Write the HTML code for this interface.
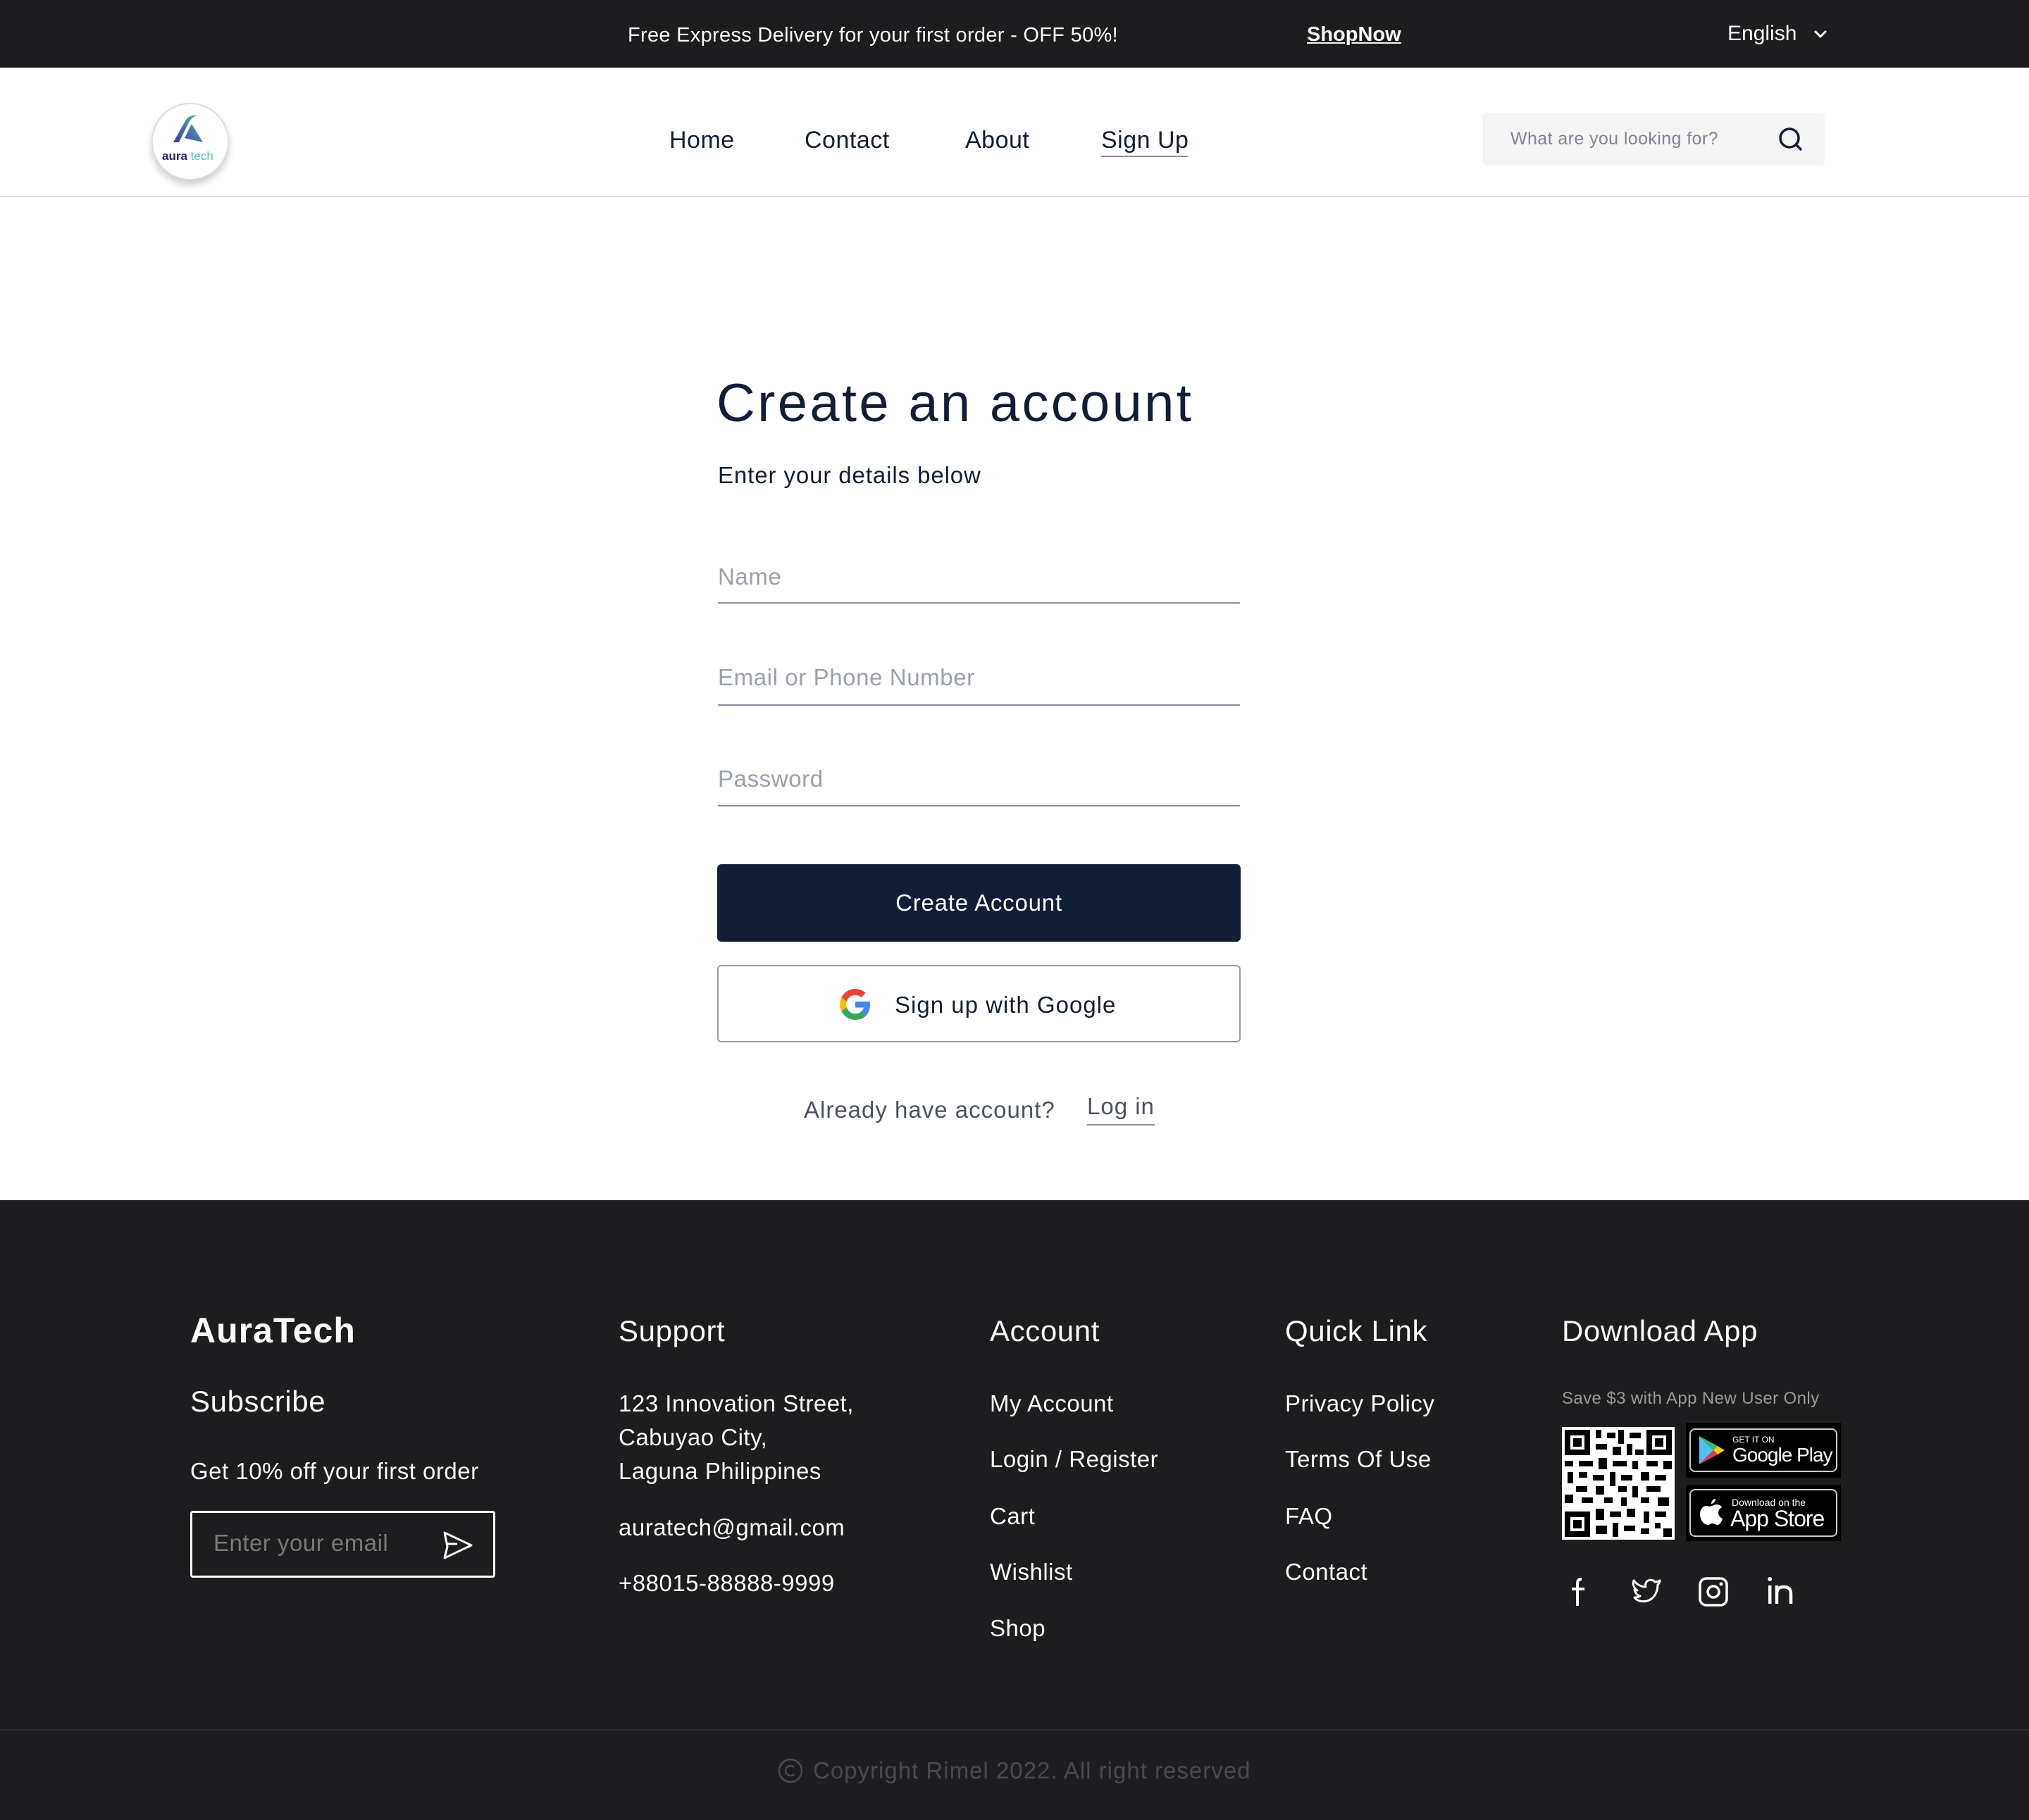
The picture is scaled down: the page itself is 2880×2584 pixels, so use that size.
<!DOCTYPE html>
<html><head><meta charset="utf-8"><style>
*{margin:0;padding:0;box-sizing:border-box}
body{width:2880px;height:2584px;position:relative;background:#fff;font-family:"Liberation Sans",Arial,sans-serif;overflow:hidden}
.a{position:absolute;white-space:nowrap}
.top{position:absolute;left:0;top:0;width:2880px;height:96px;background:#1d1d1f;color:#fafafa}
.hdr{position:absolute;left:0;top:96px;width:2880px;height:184px;border-bottom:2px solid #e2e2e2}
.nav{font-size:34px;color:#121d36;letter-spacing:0.5px}
.ph{font-size:33px;color:#9aa0ab;left:1019px;letter-spacing:0.6px}
.ul{position:absolute;left:1019px;width:741px;height:2px;background:#8a909c}
.foot{position:absolute;left:0;top:1704px;width:2880px;height:880px;background:#1d1d1f}
.fh{font-size:42px;color:#fafafa;letter-spacing:0.6px}
.fi{font-size:33px;color:#fafafa;letter-spacing:0.5px}
</style></head><body>
<div class="top">
<div class="a" style="left:891px;top:34px;font-size:29px;letter-spacing:0.3px">Free Express Delivery for your first order - OFF 50%!</div>
<div class="a" style="left:1855px;top:33px;font-size:29px;font-weight:bold;text-decoration:underline">ShopNow</div>
<div class="a" style="left:2452px;top:31px;font-size:30px">English</div>
<svg class="a" style="left:2572px;top:36px" width="24" height="24" viewBox="0 0 24 24"><path d="M4 8l8 8 8-8" fill="none" stroke="#fff" stroke-width="3"/></svg>
</div>
<div class="hdr">
<div class="a" style="left:215px;top:50px;width:110px;height:110px;border-radius:50%;background:#fff;border:2px solid #ddd;box-shadow:0 6px 10px rgba(0,0,0,.2)"></div>
<svg class="a" style="left:240px;top:66px" width="60" height="44" viewBox="0 0 60 44"><defs><linearGradient id="g" x1="0" y1="1" x2="1" y2="0"><stop offset="0" stop-color="#4b2fa6"/><stop offset="1" stop-color="#3cc9a0"/></linearGradient></defs><path d="M6 40 L24 8 Q30 0 40 2 Q32 4 28 12 L14 40Z M22 34 L32 14 L48 40Z" fill="url(#g)"/></svg>
<div class="a" style="left:230px;top:116px;font-size:17px;font-weight:bold;color:#2b2266">aura <span style="color:#4cc2b0;font-weight:normal">tech</span></div>
<div class="a nav" style="left:950px;top:84px">Home</div>
<div class="a nav" style="left:1142px;top:84px">Contact</div>
<div class="a nav" style="left:1370px;top:84px">About</div>
<div class="a nav" style="left:1563px;top:84px;border-bottom:2px solid #8a909c;padding-bottom:2px">Sign Up</div>
<div class="a" style="left:2105px;top:64px;width:485px;height:75px;background:#f4f4f4;border-radius:6px"></div>
<div class="a" style="left:2144px;top:87px;font-size:25px;color:#7d8594;letter-spacing:0.4px">What are you looking for?</div>
<svg class="a" style="left:2522px;top:82px" width="40" height="40" viewBox="0 0 40 40"><circle cx="18" cy="18" r="13" fill="none" stroke="#121d36" stroke-width="3.5"/><path d="M27 27l8 8" stroke="#121d36" stroke-width="3.5"/></svg>
</div>

<div class="a" style="left:1017px;top:529px;font-size:76px;color:#121d36;letter-spacing:3.3px">Create an account</div>
<div class="a" style="left:1019px;top:656px;font-size:33px;color:#121d36;letter-spacing:0.9px">Enter your details below</div>
<div class="a ph" style="top:800px">Name</div><div class="ul" style="top:855px"></div>
<div class="a ph" style="top:943px">Email or Phone Number</div><div class="ul" style="top:1000px"></div>
<div class="a ph" style="top:1087px">Password</div><div class="ul" style="top:1143px"></div>
<div class="a" style="left:1018px;top:1227px;width:743px;height:110px;background:#121d36;border-radius:6px;color:#fff;font-size:33px;text-align:center;line-height:110px;letter-spacing:0.8px">Create Account</div>
<div class="a" style="left:1018px;top:1370px;width:743px;height:110px;border:2px solid #9a9ea6;border-radius:6px"></div>
<svg class="a" style="left:1190px;top:1402px" width="48" height="48" viewBox="0 0 48 48"><path fill="#4285F4" d="M45 24.5c0-1.6-.1-3-.4-4.5H24v8.5h11.8c-.5 2.7-2 5-4.4 6.6v5.5h7.1C42.6 36.8 45 31.2 45 24.5z"/><path fill="#34A853" d="M24 46c5.9 0 10.9-2 14.5-5.4l-7.1-5.5c-2 1.3-4.5 2.1-7.4 2.1-5.7 0-10.5-3.8-12.2-9H4.5v5.7C8.1 41.1 15.5 46 24 46z"/><path fill="#FBBC05" d="M11.8 28.2c-.4-1.3-.7-2.7-.7-4.2s.3-2.9.7-4.2v-5.7H4.5C3 17.1 2 20.4 2 24s1 6.9 2.5 9.9z"/><path fill="#EA4335" d="M24 10.8c3.2 0 6.1 1.1 8.4 3.3l6.3-6.3C34.9 4.3 29.9 2 24 2 15.5 2 8.1 6.9 4.5 14.1l7.3 5.7C13.5 14.6 18.3 10.8 24 10.8z"/></svg>
<div class="a" style="left:1270px;top:1408px;font-size:33px;color:#121d36;letter-spacing:1px">Sign up with Google</div>
<div class="a" style="left:1141px;top:1557px;font-size:33px;color:#4b5262;letter-spacing:1px">Already have account?</div>
<div class="a" style="left:1543px;top:1552px;font-size:33px;color:#4b5262;border-bottom:2px solid #8a909c;padding-bottom:6px;letter-spacing:1px">Log in</div>

<div class="foot">
<div class="a" style="left:270px;top:156px;font-size:50px;font-weight:bold;color:#fafafa;letter-spacing:1px">AuraTech</div>
<div class="a fh" style="left:270px;top:262px">Subscribe</div>
<div class="a fi" style="left:270px;top:366px">Get 10% off your first order</div>
<div class="a" style="left:270px;top:441px;width:433px;height:95px;border:3px solid #fafafa;border-radius:4px"></div>
<div class="a" style="left:303px;top:468px;font-size:33px;color:#7a7a7a;letter-spacing:0.5px">Enter your email</div>
<svg class="a" style="left:625px;top:468px" width="48" height="44" viewBox="0 0 48 44"><path d="M6 4 L44 22 L6 40 L10 24 L6 4Z M10 20 H24" fill="none" stroke="#fff" stroke-width="3" stroke-linejoin="round"/></svg>

<div class="a fh" style="left:878px;top:162px">Support</div>
<div class="a fi" style="left:878px;top:270px">123 Innovation Street,</div>
<div class="a fi" style="left:878px;top:318px">Cabuyao City,</div>
<div class="a fi" style="left:878px;top:366px">Laguna Philippines</div>
<div class="a fi" style="left:878px;top:446px">auratech@gmail.com</div>
<div class="a fi" style="left:878px;top:525px">+88015-88888-9999</div>

<div class="a fh" style="left:1405px;top:162px">Account</div>
<div class="a fi" style="left:1405px;top:270px">My Account</div>
<div class="a fi" style="left:1405px;top:349px">Login / Register</div>
<div class="a fi" style="left:1405px;top:430px">Cart</div>
<div class="a fi" style="left:1405px;top:509px">Wishlist</div>
<div class="a fi" style="left:1405px;top:589px">Shop</div>

<div class="a fh" style="left:1824px;top:162px">Quick Link</div>
<div class="a fi" style="left:1824px;top:270px">Privacy Policy</div>
<div class="a fi" style="left:1824px;top:349px">Terms Of Use</div>
<div class="a fi" style="left:1824px;top:430px">FAQ</div>
<div class="a fi" style="left:1824px;top:509px">Contact</div>

<div class="a fh" style="left:2217px;top:162px">Download App</div>
<div class="a" style="left:2217px;top:268px;font-size:24px;color:#9a9a9a;letter-spacing:0.4px">Save $3 with App New User Only</div>
<svg class="a" style="left:2217px;top:322px" width="160" height="160" viewBox="0 0 40 40">
<rect width="40" height="40" fill="#fff"/>
<g fill="#000">
<path d="M1 1h9v9h-9z M30 1h9v9h-9z M1 30h9v9h-9z" /><path d="M3 3h5v5h-5z M32 3h5v5h-5z M3 32h5v5h-5z" fill="#fff"/><path d="M4 4h3v3h-3z M33 4h3v3h-3z M4 33h3v3h-3z"/>
<path d="M12 1h2v3h-2z M16 2h3v2h-3z M20 1h2v5h-2z M24 2h4v2h-4z M12 6h4v2h-4z M18 7h3v3h-3z M23 6h2v4h-2z M26 8h3v2h-3z M1 12h3v2h-3z M6 12h5v2h-5z M13 11h3v4h-3z M18 12h5v2h-5z M25 12h2v3h-2z M30 12h4v2h-4z M36 12h3v3h-3z M2 16h2v4h-2z M6 16h3v2h-3z M11 17h4v2h-4z M17 16h2v5h-2z M21 17h4v2h-4z M28 16h3v3h-3z M33 17h4v2h-4z M5 21h4v2h-4z M12 21h3v3h-3z M20 21h3v2h-3z M25 21h2v4h-2z M30 21h5v2h-5z M1 24h3v3h-3z M7 25h4v2h-4z M15 25h3v2h-3z M21 25h2v3h-2z M28 25h3v2h-3z M34 25h4v3h-4z M12 29h3v4h-3z M17 30h4v2h-4z M23 29h3v3h-3z M29 30h2v4h-2z M33 30h4v2h-4z M12 35h4v3h-4z M18 34h2v5h-2z M22 35h4v2h-4z M28 36h3v2h-3z M33 34h2v2h-2z M36 36h3v3h-3z"/>
</g></svg>
<div class="a" style="left:2393px;top:316px;width:220px;height:78px;background:#000"></div>
<div class="a" style="left:2398px;top:324px;width:210px;height:62px;border:2px solid #ccc;border-radius:8px"></div>
<svg class="a" style="left:2410px;top:333px" width="40" height="44" viewBox="0 0 40 44"><path d="M2 2 L22 22 L2 42Z" fill="#4fc3f7"/><path d="M2 2 L28 16 L22 22Z" fill="#48b564"/><path d="M2 42 L22 22 L28 28Z" fill="#e53950"/><path d="M28 16 L38 22 L28 28 L22 22Z" fill="#fdd000"/></svg>
<div class="a" style="left:2459px;top:333px;font-size:12px;color:#fff">GET IT ON</div>
<div class="a" style="left:2459px;top:346px;font-size:28px;color:#fff;letter-spacing:-1px">Google Play</div>
<div class="a" style="left:2393px;top:404px;width:220px;height:80px;background:#000"></div>
<div class="a" style="left:2398px;top:410px;width:210px;height:68px;border:2px solid #ccc;border-radius:8px"></div>
<svg class="a" style="left:2412px;top:422px" width="34" height="40" viewBox="0 0 34 40"><path d="M23 2c0 4-3 7-6 7 0-4 3-7 6-7z M17 12c3 0 4-2 8-2 3 0 6 2 7 4-3 2-5 4-5 8 0 4 3 7 6 8-1 4-4 9-7 9-3 0-3-2-7-2s-4 2-7 2C6 39 1 31 1 24c0-7 4-12 9-12 3 0 5 2 7 0z" fill="#fff"/></svg>
<div class="a" style="left:2458px;top:421px;font-size:14px;color:#fff">Download on the</div>
<div class="a" style="left:2456px;top:434px;font-size:32px;color:#fff;letter-spacing:-1px">App Store</div>
<svg class="a" style="left:2225px;top:534px" width="32" height="42" viewBox="0 0 32 42"><path d="M20 4 Q14 4 14 10 V42 M6 18 H24" fill="none" stroke="#fff" stroke-width="4"/></svg>
<svg class="a" style="left:2316px;top:536px" width="42" height="38" viewBox="0 0 42 38"><path d="M40 4 C37 6 35 6 33 6 C30 2 22 2 20 8 C19 11 20 13 20 13 C13 13 7 9 3 4 C1 9 3 15 8 18 C6 18 5 18 4 17 C5 22 8 25 12 26 C10 28 6 28 4 28 C8 34 20 36 28 30 C35 25 37 16 37 10 C39 8 40 6 40 4Z" fill="none" stroke="#fff" stroke-width="3" stroke-linejoin="round"/></svg>
<svg class="a" style="left:2411px;top:535px" width="42" height="42" viewBox="0 0 42 42"><rect x="2" y="2" width="38" height="38" rx="9" fill="none" stroke="#fff" stroke-width="3.5"/><circle cx="21" cy="21" r="8" fill="none" stroke="#fff" stroke-width="3.5"/><circle cx="32" cy="10" r="2.5" fill="#fff"/></svg>
<svg class="a" style="left:2507px;top:533px" width="40" height="42" viewBox="0 0 40 42"><rect x="3" y="14" width="4.5" height="26" fill="#fff"/><circle cx="5.2" cy="5" r="3" fill="#fff"/><path d="M15 40 V14 M15 26 Q15 16 25 16 Q35 16 35 26 V40" fill="none" stroke="#fff" stroke-width="4.5"/></svg>

<div class="a" style="left:0;top:751px;width:2880px;height:2px;background:#2c2c2e"></div>
<svg class="a" style="left:1104px;top:792px" width="36" height="36" viewBox="0 0 36 36"><circle cx="18" cy="18" r="16" fill="none" stroke="#4a4a4c" stroke-width="2.5"/><path d="M23 13 A7 7 0 1 0 23 23" fill="none" stroke="#4a4a4c" stroke-width="2.5"/></svg>
<div class="a" style="left:1154px;top:791px;font-size:33px;color:#4a4a4c;letter-spacing:1px">Copyright Rimel 2022. All right reserved</div>
</div>
</body></html>
